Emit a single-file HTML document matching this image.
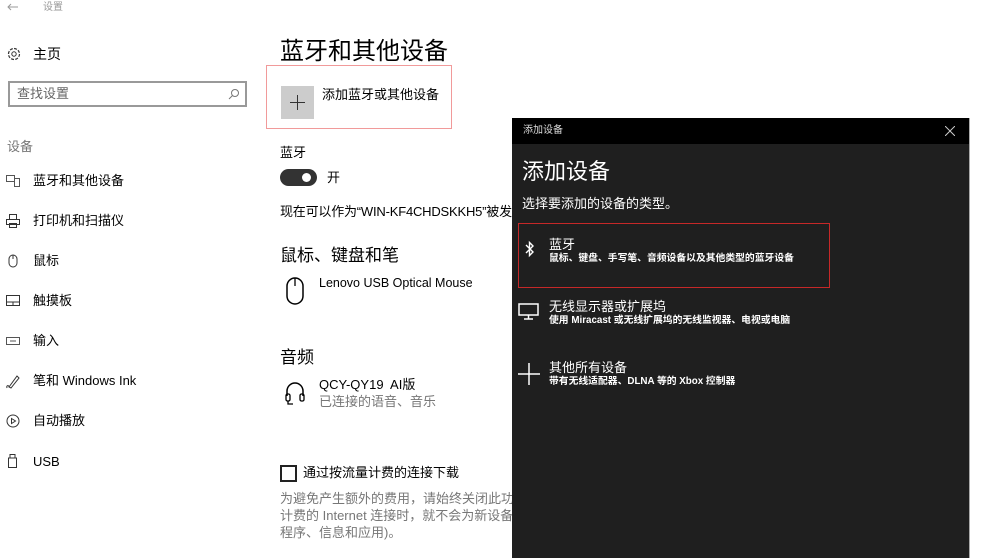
<!DOCTYPE html><html><head><meta charset="utf-8"><style>
*{margin:0;padding:0;box-sizing:border-box}
body{width:987px;height:553px;overflow:hidden;background:#fff;font-family:"Liberation Sans","Noto Sans CJK SC",sans-serif;color:#000;position:relative}
.a{position:absolute;white-space:nowrap;line-height:1}
.g{color:#777}
svg{position:absolute}
</style></head><body>
<svg style="left:7px;top:3px" width="12" height="8"><path d="M11 4H1M4 1L1 4L4 7" fill="none" stroke="#999"/></svg>
<div class="a" style="left:43px;top:3px;font-size:10px;color:#999">设置</div>
<svg style="left:6px;top:46px" width="16" height="16" viewBox="0 0 16 16"><circle cx="8" cy="8" r="5.5" fill="none" stroke="#333" stroke-width="1.2" stroke-dasharray="3 1.3"/><circle cx="8" cy="8" r="2.2" fill="none" stroke="#333"/></svg>
<div class="a" style="left:33px;top:47px;font-size:14px">主页</div>
<div class="a" style="left:8px;top:81px;width:239px;height:26px;border:2px solid #999"></div>
<div class="a" style="left:17px;top:87px;font-size:13px;color:#666">查找设置</div>
<svg style="left:228px;top:88px" width="12" height="12"><circle cx="7" cy="5" r="3.5" fill="none" stroke="#777"/><line x1="4.5" y1="7.5" x2="1" y2="11" stroke="#777"/></svg>
<div class="a" style="left:7px;top:140px;font-size:13px;color:#777">设备</div>
<svg style="left:6px;top:175px" width="14" height="12"><rect x=".5" y=".5" width="8" height="6" fill="none" stroke="#555"/><rect x="8.5" y="3.5" width="5" height="8" fill="none" stroke="#555"/></svg>
<div class="a" style="left:33px;top:174px;font-size:13px">蓝牙和其他设备</div>
<svg style="left:6px;top:214px" width="14" height="14"><rect x="3.5" y=".5" width="7" height="5" fill="none" stroke="#333"/><rect x=".5" y="5.5" width="13" height="5" fill="none" stroke="#333"/><rect x="3.5" y="9.5" width="7" height="4" fill="none" stroke="#333"/></svg>
<div class="a" style="left:33px;top:214px;font-size:13px">打印机和扫描仪</div>
<svg style="left:8px;top:254px" width="10" height="14"><rect x="1" y="1" width="8" height="12" rx="4" fill="none" stroke="#333"/><line x1="5" y1="1" x2="5" y2="5" stroke="#333"/></svg>
<div class="a" style="left:33px;top:254px;font-size:13px">鼠标</div>
<svg style="left:6px;top:295px" width="14" height="11"><rect x=".5" y=".5" width="13" height="10" fill="none" stroke="#333"/><line x1="0" y1="7" x2="14" y2="7" stroke="#333"/><line x1="7" y1="7" x2="7" y2="11" stroke="#333"/></svg>
<div class="a" style="left:33px;top:294px;font-size:13px">触摸板</div>
<svg style="left:6px;top:337px" width="14" height="8"><rect x=".5" y=".5" width="13" height="7" fill="none" stroke="#555"/><line x1="4" y1="4" x2="10" y2="4" stroke="#555"/></svg>
<div class="a" style="left:33px;top:334px;font-size:13px">输入</div>
<svg style="left:5px;top:373px" width="16" height="16"><path d="M4 14L12 3L14 5L6 15Z M2 15C1 12 4 12 4 14" fill="none" stroke="#333"/></svg>
<div class="a" style="left:33px;top:374px;font-size:13px">笔和 Windows Ink</div>
<svg style="left:6px;top:414px" width="14" height="14"><circle cx="7" cy="7" r="6" fill="none" stroke="#333"/><path d="M5.5 4.5L9.5 7L5.5 9.5Z" fill="none" stroke="#333"/></svg>
<div class="a" style="left:33px;top:414px;font-size:13px">自动播放</div>
<svg style="left:8px;top:454px" width="9" height="14"><rect x=".5" y="4" width="8" height="9.5" fill="none" stroke="#333"/><rect x="2" y=".5" width="5" height="3.5" fill="none" stroke="#333"/></svg>
<div class="a" style="left:33px;top:455px;font-size:13px">USB</div>

<div class="a" style="left:280px;top:40px;font-size:24px">蓝牙和其他设备</div>
<div class="a" style="left:266px;top:65px;width:186px;height:64px;border:1px solid #f19a9a"></div>
<div class="a" style="left:281px;top:86px;width:33px;height:33px;background:#ccc"></div>
<svg style="left:289px;top:94px" width="17" height="17"><line x1="8.5" y1="1" x2="8.5" y2="16" stroke="#333"/><line x1="1" y1="8.5" x2="16" y2="8.5" stroke="#333"/></svg>
<div class="a" style="left:322px;top:88px;font-size:13px">添加蓝牙或其他设备</div>
<div class="a" style="left:280px;top:146px;font-size:13px">蓝牙</div>
<div class="a" style="left:280px;top:169px;width:37px;height:17px;border-radius:9px;background:#333"></div>
<div class="a" style="left:302px;top:173px;width:9px;height:9px;border-radius:50%;background:#fff"></div>
<div class="a" style="left:327px;top:171px;font-size:13px">开</div>
<div class="a" style="left:280px;top:205px;font-size:13px;letter-spacing:-0.2px">现在可以作为“WIN-KF4CHDSKKH5”被发现</div>
<div class="a" style="left:280px;top:247px;font-size:17px">鼠标、键盘和笔</div>
<svg style="left:286px;top:277px" width="18" height="28"><rect x="1" y="1" width="16" height="26" rx="8" fill="none" stroke="#000" stroke-width="1.5"/><line x1="9" y1="1" x2="9" y2="9" stroke="#000" stroke-width="1.3"/></svg>
<div class="a" style="left:319px;top:277px;font-size:12.5px">Lenovo USB Optical Mouse</div>
<div class="a" style="left:280px;top:349px;font-size:17px">音频</div>
<svg style="left:284px;top:380px" width="22" height="27"><path d="M3 16V11a8 8 0 0 1 16 0v5" fill="none" stroke="#000" stroke-width="1.5"/><rect x="2" y="14" width="4" height="7" rx="1.5" fill="none" stroke="#000" stroke-width="1.3"/><rect x="16" y="14" width="4" height="7" rx="1.5" fill="none" stroke="#000" stroke-width="1.3"/><path d="M4 21v3h5" fill="none" stroke="#000" stroke-width="1.3"/></svg>
<div class="a" style="left:319px;top:378px;font-size:13px">QCY-QY19&nbsp; AI版</div>
<div class="a" style="left:319px;top:395px;font-size:13px;color:#777">已连接的语音、音乐</div>
<div class="a" style="left:280px;top:465px;width:17px;height:17px;border:2px solid #222"></div>
<div class="a" style="left:303px;top:466px;font-size:13px">通过按流量计费的连接下载</div>
<div class="a" style="left:280px;top:490px;font-size:13px;color:#777;line-height:17px">为避免产生额外的费用，请始终关闭此功能<br>计费的 Internet 连接时，就不会为新设备下<br>程序、信息和应用)。</div>

<div class="a" style="left:512px;top:118px;width:458px;height:440px;background:#1f1f1f;border-right:1px solid #aaa"></div>
<div class="a" style="left:512px;top:118px;width:457px;height:26px;background:#000"></div>
<div class="a" style="left:523px;top:126px;font-size:10px;color:#ddd">添加设备</div>
<svg style="left:945px;top:126px" width="10" height="10"><path d="M0 0L10 10M10 0L0 10" stroke="#ccc"/></svg>
<div class="a" style="left:522px;top:161px;font-size:22px;color:#fff">添加设备</div>
<div class="a" style="left:522px;top:197px;font-size:13px;color:#fff">选择要添加的设备的类型。</div>
<div class="a" style="left:518px;top:223px;width:312px;height:65px;border:1px solid #c62828"></div>
<svg style="left:524px;top:240px" width="12" height="18"><path d="M2 5L9 12L5.5 15.5V2.5L9 6L2 13" fill="none" stroke="#fff" stroke-width="1.4"/></svg>
<div class="a" style="left:549px;top:238px;font-size:13px;color:#fff">蓝牙</div>
<div class="a" style="left:549px;top:254px;font-size:9.8px;color:#fff;font-weight:bold">鼠标、键盘、手写笔、音频设备以及其他类型的蓝牙设备</div>
<svg style="left:518px;top:303px" width="22" height="17"><rect x="1" y="1" width="19" height="11" fill="none" stroke="#fff" stroke-width="1.5"/><line x1="10.5" y1="12" x2="10.5" y2="16" stroke="#fff" stroke-width="1.5"/><line x1="6" y1="16" x2="15" y2="16" stroke="#fff" stroke-width="1.5"/></svg>
<div class="a" style="left:549px;top:300px;font-size:13px;color:#fff">无线显示器或扩展坞</div>
<div class="a" style="left:549px;top:316px;font-size:9.8px;color:#fff;font-weight:bold">使用 Miracast 或无线扩展坞的无线监视器、电视或电脑</div>
<svg style="left:518px;top:363px" width="22" height="22"><line x1="11" y1="0" x2="11" y2="22" stroke="#fff" stroke-width="1.5"/><line x1="0" y1="11" x2="22" y2="11" stroke="#fff" stroke-width="1.5"/></svg>
<div class="a" style="left:549px;top:361px;font-size:13px;color:#fff">其他所有设备</div>
<div class="a" style="left:549px;top:377px;font-size:9.8px;color:#fff;font-weight:bold">带有无线适配器、DLNA 等的 Xbox 控制器</div>
</body></html>
